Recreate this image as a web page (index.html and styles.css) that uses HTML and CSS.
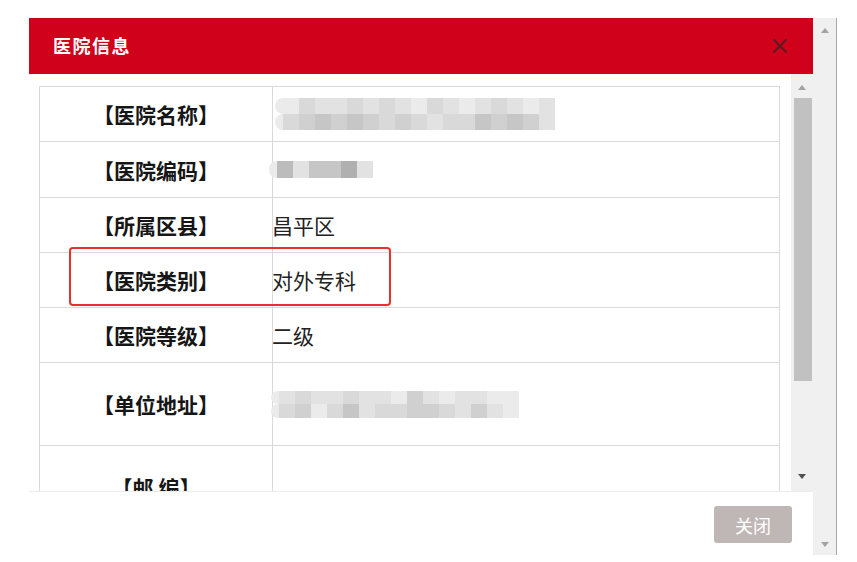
FILE: index.html
```html
<!DOCTYPE html>
<html lang="zh-CN">
<head>
<meta charset="utf-8">
<title>医院信息</title>
<link rel="stylesheet" href="styles.css">
</head>
<body>
<div class="page">
  <div class="dialog">
    <div class="dlg-head">
      <span class="dlg-title">医院信息</span>
      <span class="dlg-close" aria-label="关闭">
        <svg width="16" height="16" viewBox="0 0 16 16"><path d="M1.5 1.5 L14.5 14.5 M14.5 1.5 L1.5 14.5" stroke="#5c1a22" stroke-width="2" fill="none"/></svg>
      </span>
    </div>
    <div class="dlg-body">
      <div class="dlg-content">
        <div class="info-wrap">
          <table class="info">
            <colgroup><col class="col-label"><col class="col-value"></colgroup>
            <tr class="r55">
              <td class="lbl">【医院名称】</td>
              <td class="val">
                <div class="mosaic m-name">
                  <div class="mrow h16"><span class="cap c0"></span><span class="c0"></span><span class="c2"></span><span class="c1"></span><span class="c1"></span><span class="c2"></span><span class="c1"></span><span class="c2"></span><span class="c1"></span><span class="c0"></span><span class="c2"></span><span class="c1"></span><span class="c0"></span><span class="c1"></span><span class="c2"></span><span class="c1"></span><span class="c0"></span><span class="c1"></span></div>
                  <div class="mrow h16"><span class="cap c0"></span><span class="c2"></span><span class="c3"></span><span class="c4"></span><span class="c3"></span><span class="c4"></span><span class="c3"></span><span class="c2"></span><span class="c3"></span><span class="c2"></span><span class="c1"></span><span class="c2"></span><span class="c2"></span><span class="c4"></span><span class="c3"></span><span class="c4"></span><span class="c3"></span><span class="c1"></span></div>
                </div>
              </td>
            </tr>
            <tr class="r56">
              <td class="lbl">【医院编码】</td>
              <td class="val">
                <div class="mosaic m-code">
                  <div class="mrow h17"><span class="cap c0"></span><span class="c5"></span><span class="c1"></span><span class="c4"></span><span class="c4"></span><span class="c6"></span><span class="c1"></span></div>
                </div>
              </td>
            </tr>
            <tr class="r55">
              <td class="lbl">【所属区县】</td>
              <td class="val"><span class="txt">昌平区</span></td>
            </tr>
            <tr class="r55">
              <td class="lbl">【医院类别】</td>
              <td class="val"><span class="txt">对外专科</span></td>
            </tr>
            <tr class="r55">
              <td class="lbl">【医院等级】</td>
              <td class="val"><span class="txt">二级</span></td>
            </tr>
            <tr class="r83">
              <td class="lbl">【单位地址】</td>
              <td class="val">
                <div class="mosaic m-addr">
                  <div class="mrow h13"><span class="cap c0"></span><span class="c1"></span><span class="c2"></span><span class="c1"></span><span class="c1"></span><span class="c2"></span><span class="c1"></span><span class="c1"></span><span class="c0"></span><span class="c3"></span><span class="c1"></span><span class="c0"></span><span class="c1"></span><span class="c1"></span><span class="c0"></span><span class="c0"></span></div>
                  <div class="mrow h14"><span class="cap c0"></span><span class="c2"></span><span class="c3"></span><span class="c0"></span><span class="c2"></span><span class="c4"></span><span class="c1"></span><span class="c2"></span><span class="c2"></span><span class="c3"></span><span class="c3"></span><span class="c2"></span><span class="c1"></span><span class="c3"></span><span class="c1"></span><span class="c0"></span></div>
                </div>
              </td>
            </tr>
            <tr class="r83">
              <td class="lbl">【邮 编】</td>
              <td class="val"></td>
            </tr>
          </table>
          <div class="highlight"></div>
        </div>
      </div>
      <div class="vscroll inner">
        <span class="arr up light"></span>
        <span class="thumb"></span>
        <span class="arr down dark"></span>
      </div>
    </div>
    <div class="dlg-foot">
      <button class="btn-close" type="button">关闭</button>
    </div>
  </div>
  <div class="vscroll outer">
    <span class="arr up light"></span>
    <span class="arr down light"></span>
  </div>
</div>
</body>
</html>
```

FILE: styles.css
```css
html, body {
  margin: 0;
  padding: 0;
  background: #ffffff;
}

body {
  font-family: "Noto Sans CJK SC", "Noto Sans", sans-serif;
  color: #1e1e1e;
}

.page {
  display: flex;
  align-items: flex-start;
  padding: 18px 0 0 29px;
}

.dialog {
  width: 784px;
  display: flex;
  flex-direction: column;
  background: #ffffff;
}

.dlg-head {
  height: 56px;
  background: #d0011b;
  display: flex;
  align-items: center;
  justify-content: space-between;
  padding: 0 25px 0 24px;
}

.dlg-title {
  color: #ffffff;
  font-size: 18px;
  font-weight: bold;
  letter-spacing: 1.5px;
  line-height: 1;
  margin-top: -2px;
}

.dlg-close {
  display: flex;
  width: 16px;
  height: 16px;
  margin-top: -1px;
}

.dlg-body {
  height: 417px;
  display: flex;
  border-bottom: 1px solid #ececec;
}

.dlg-content {
  flex: 1;
  overflow: hidden;
  padding: 12px 12px 0 10px;
}

.info-wrap {
  position: relative;
}

.info {
  width: 741px;
  border-collapse: collapse;
  table-layout: fixed;
}

.col-label { width: 233px; }

.info td {
  border: 1px solid #d9d9d9;
  padding: 0;
  font-size: 21px;
  line-height: 24px;
}

.r55 { height: 55px; }
.r56 { height: 56px; }
.r83 { height: 83px; }

.lbl {
  text-align: center;
  font-weight: bold;
  color: #161616;
}

.val {
  color: #222222;
}

.txt {
  margin-left: -1px;
}

.mosaic {
  display: flex;
  flex-direction: column;
}

.mrow {
  display: flex;
}

.mrow span {
  width: 16px;
  flex: none;
}

.mrow .cap {
  width: 8px;
  border-radius: 8px 0 0 8px;
}

.h13 { height: 13px; }
.h14 { height: 14px; }
.h16 { height: 16px; }
.h17 { height: 17px; }

.m-name { margin-left: 2px; }
.m-code { margin-left: -4px; }
.m-addr { margin-left: -2px; }

.c0 { background: #ebebeb; }
.c1 { background: #e2e2e2; }
.c2 { background: #d9d9d9; }
.c3 { background: #d0d0d0; }
.c4 { background: #c6c6c6; }
.c5 { background: #bcbcbc; }
.c6 { background: #b0b0b0; }

.highlight {
  position: absolute;
  left: 30px;
  top: 161px;
  width: 322px;
  height: 59px;
  box-sizing: border-box;
  border: 2.5px solid #e8312e;
  border-radius: 4px;
}

.vscroll {
  background: #f0f0f0;
  display: flex;
  flex-direction: column;
  align-items: center;
  box-sizing: border-box;
}

.vscroll.inner {
  width: 22px;
  padding: 11px 0 12px;
}

.vscroll.outer {
  width: 24px;
  height: 537px;
  border-right: 1px solid #a8a8a8;
  padding: 10px 0 8px;
  justify-content: space-between;
}

.arr {
  width: 0;
  height: 0;
  border-left: 4.5px solid transparent;
  border-right: 4.5px solid transparent;
}

.arr.up.light { border-bottom: 5px solid #a3a3a3; }
.arr.down.light { border-top: 5px solid #a3a3a3; }
.arr.down.dark { border-top: 5px solid #505050; }

.inner .thumb {
  width: 18px;
  height: 283px;
  margin-top: 8px;
  background: #c1c1c1;
  margin-left: 2px;
}

.inner .arr.down {
  margin-top: auto;
}

.dlg-foot {
  height: 62px;
  display: flex;
  justify-content: flex-end;
  align-items: flex-start;
  padding: 14px 21px 0 0;
  box-sizing: border-box;
}

.btn-close {
  width: 78px;
  height: 37px;
  border: none;
  border-radius: 3px;
  background: #bfb6b6;
  color: #ffffff;
  font-family: "Noto Sans CJK SC", "Noto Sans", sans-serif;
  font-size: 18px;
  padding: 0;
}
```
